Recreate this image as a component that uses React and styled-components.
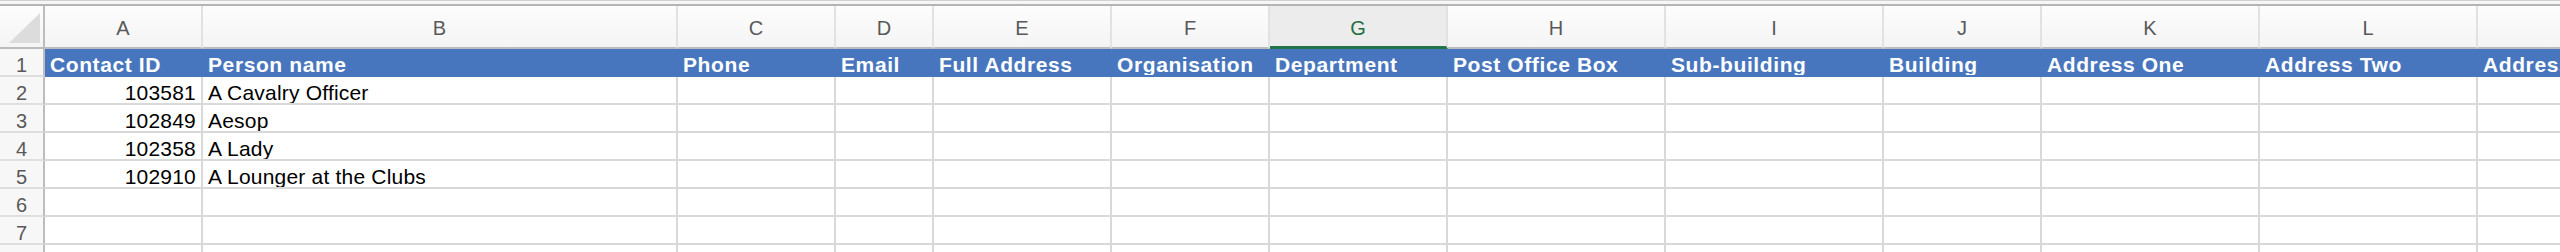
import React from 'react';
import styled, { createGlobalStyle } from 'styled-components';

const Global = createGlobalStyle`
  html, body { margin: 0; padding: 0; background: #ffffff; }
  body { font-family: "Liberation Sans", Arial, Helvetica, sans-serif; overflow: hidden; }
`;

const COLUMNS = [
  { letter: 'A', width: 158, title: 'Contact ID' },
  { letter: 'B', width: 475, title: 'Person name' },
  { letter: 'C', width: 158, title: 'Phone' },
  { letter: 'D', width: 98, title: 'Email' },
  { letter: 'E', width: 178, title: 'Full Address' },
  { letter: 'F', width: 158, title: 'Organisation' },
  { letter: 'G', width: 178, title: 'Department' },
  { letter: 'H', width: 218, title: 'Post Office Box' },
  { letter: 'I', width: 218, title: 'Sub-building' },
  { letter: 'J', width: 158, title: 'Building' },
  { letter: 'K', width: 218, title: 'Address One' },
  { letter: 'L', width: 218, title: 'Address Two' },
  { letter: 'M', width: 218, title: 'Address Three' },
];

const DATA = [
  ['103581', 'A Cavalry Officer'],
  ['102849', 'Aesop'],
  ['102358', 'A Lady'],
  ['102910', 'A Lounger at the Clubs'],
];

const SELECTED = 'G';
const TOTAL_ROWS = 8;

const Page = styled.div`
  width: 2560px;
  height: 252px;
  overflow: hidden;
  background: #ffffff;
`;

const ChromeEdge = styled.div`
  height: 6px;
  box-sizing: border-box;
  border-top: 1px solid #d2d2d2;
  border-bottom: 2px solid #b4b4b4;
  background: #f6f6f6;
`;

const Sheet = styled.div`
  display: grid;
  grid-template-columns: ${p => p.$template};
  grid-auto-rows: 28px;
  grid-template-rows: 43px;
`;

const Corner = styled.div`
  box-sizing: border-box;
  background: linear-gradient(#fdfdfd, #f4f4f4);
  border-right: 2px solid #bdbdbd;
  border-bottom: 2px solid #bcbcbc;
  display: flex;
  align-items: flex-end;
  justify-content: flex-end;
  padding: 0 3px 4px 0;
`;

const ColHeader = styled.div`
  box-sizing: border-box;
  background: ${p => (p.$selected ? '#ececec' : 'linear-gradient(#fdfdfd, #f4f4f4)')};
  border-right: 2px solid #e2e2e2;
  border-bottom: ${p => (p.$selected ? '3px solid #237448' : '2px solid #bcbcbc')};
  color: ${p => (p.$selected ? '#1f6f43' : '#595959')};
  font-size: 20px;
  line-height: 20px;
  display: flex;
  align-items: center;
  justify-content: center;
  padding-top: ${p => (p.$selected ? '4px' : '3px')};
  overflow: hidden;
`;

const RowHeader = styled.div`
  box-sizing: border-box;
  background: #f7f7f7;
  border-right: 2px solid #bdbdbd;
  border-bottom: 2px solid #dedede;
  color: #595959;
  font-size: 20px;
  line-height: 20px;
  display: flex;
  align-items: center;
  justify-content: center;
  padding-top: 5px;
`;

const Cell = styled.div`
  box-sizing: border-box;
  background: ${p => (p.$title ? '#4876be' : '#ffffff')};
  border-right: 2px solid ${p => (p.$title ? '#4876be' : '#d9d9d9')};
  border-bottom: 2px solid ${p => (p.$title ? '#4876be' : '#d9d9d9')};
  color: ${p => (p.$title ? '#ffffff' : '#000000')};
  font-size: 21px;
  line-height: 21px;
  font-weight: ${p => (p.$title ? 700 : 400)};
  letter-spacing: ${p => (p.$title ? '0.6px' : '0.2px')};
  display: flex;
  align-items: center;
  justify-content: ${p => (p.$numeric ? 'flex-end' : 'flex-start')};
  padding: 5px ${p => (p.$numeric ? '5px' : '0')} 0 ${p => (p.$numeric ? '0' : '5px')};
  white-space: nowrap;
  overflow: hidden;
`;

const CornerMark = () => (
  <svg width="31" height="30" viewBox="0 0 31 30">
    <polygon points="31,0 31,30 0,30" fill="#dcdcdc" />
  </svg>
);

export default function App() {
  const template = ['45px', ...COLUMNS.map(c => `${c.width}px`)].join(' ');
  const rows = [];
  for (let r = 1; r <= TOTAL_ROWS; r++) {
    rows.push(<RowHeader key={`rh${r}`}>{r}</RowHeader>);
    COLUMNS.forEach((c, ci) => {
      let content = '';
      let numeric = false;
      if (r === 1) content = c.title;
      else if (DATA[r - 2] && ci < 2) {
        content = DATA[r - 2][ci];
        numeric = ci === 0;
      }
      rows.push(
        <Cell key={`c${r}-${c.letter}`} $title={r === 1} $numeric={numeric}>
          {content}
        </Cell>
      );
    });
  }
  return (
    <Page>
      <Global />
      <ChromeEdge />
      <Sheet $template={template}>
        <Corner>
          <CornerMark />
        </Corner>
        {COLUMNS.map(c => (
          <ColHeader key={c.letter} $selected={c.letter === SELECTED}>
            {c.letter}
          </ColHeader>
        ))}
        {rows}
      </Sheet>
    </Page>
  );
}
